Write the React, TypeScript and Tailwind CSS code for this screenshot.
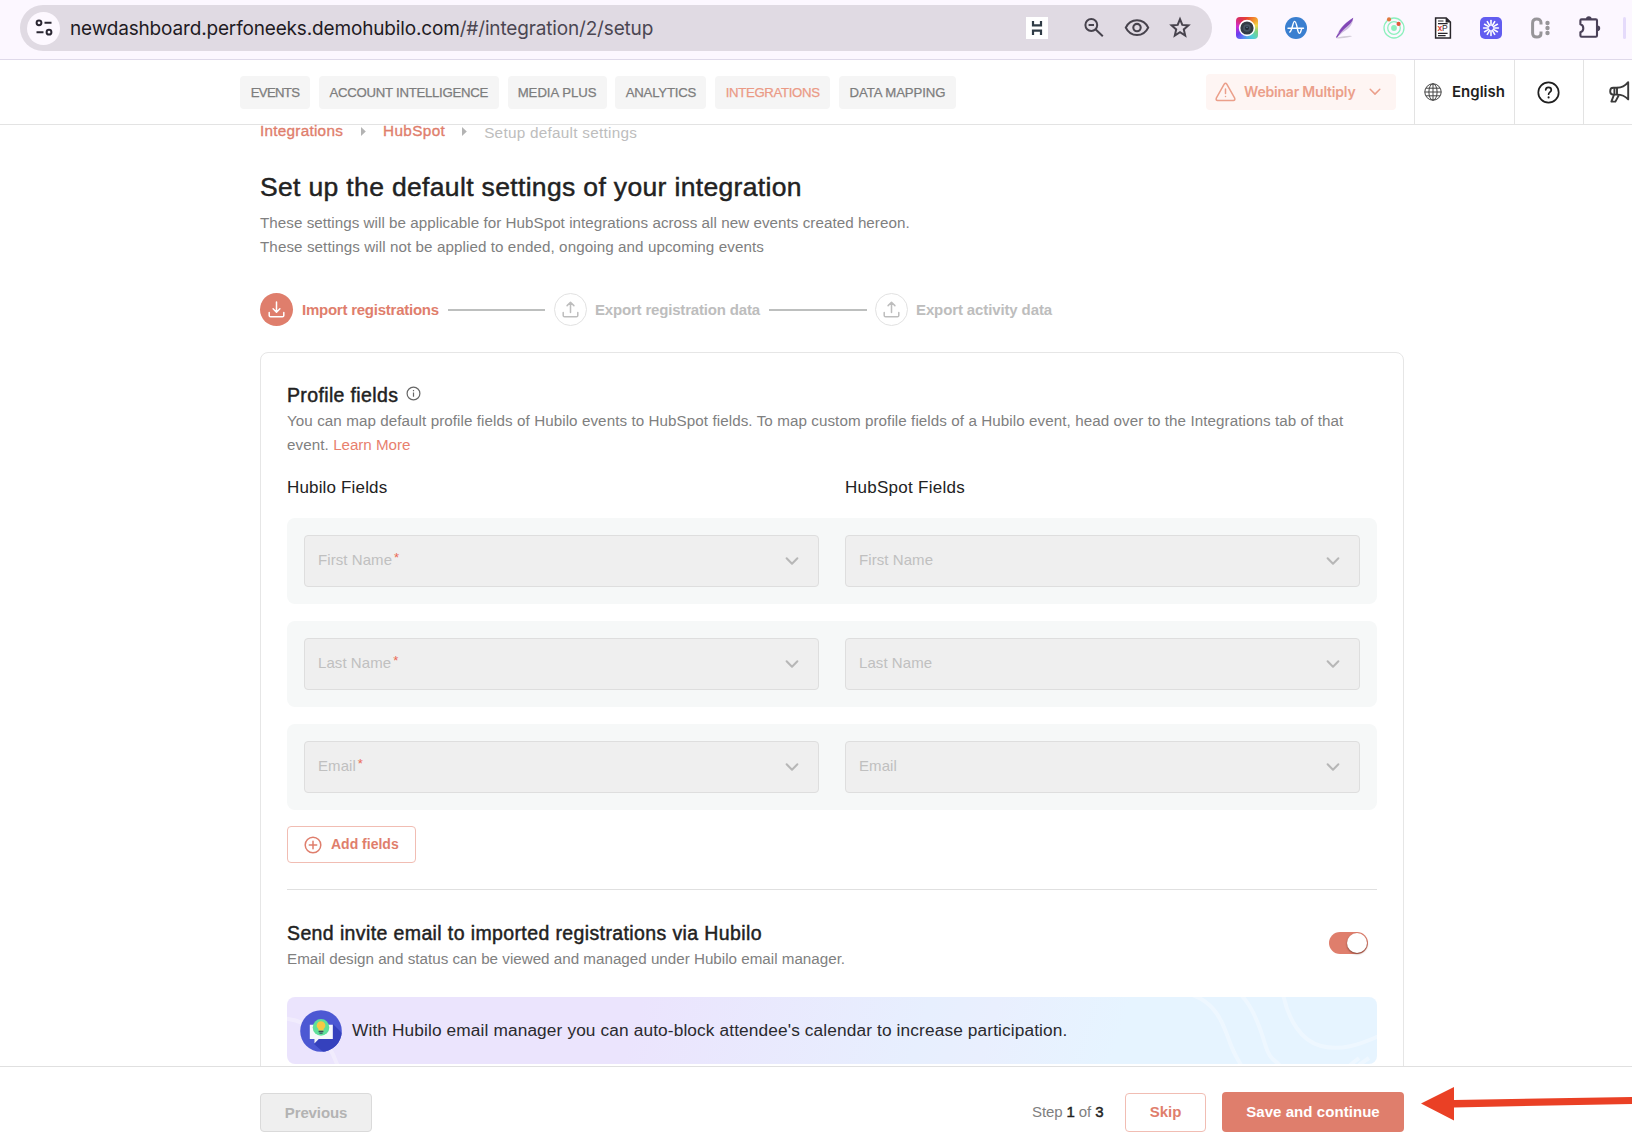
import type { ReactNode } from "react";

const medium = "[-webkit-text-stroke:0.45px_currentColor]";

/* ---------- browser toolbar ---------- */

function TuneIcon() {
  return (
    <svg width="18" height="22" viewBox="0 0 18 22" fill="none" stroke="#2b2733" strokeWidth="2">
      <circle cx="4" cy="5.8" r="2.4" />
      <path d="M9.5 5.8H16.5M1.5 15.2H8.5" />
      <circle cx="14" cy="15.2" r="2.4" />
    </svg>
  );
}

function ZoomOutIcon() {
  return (
    <svg width="24" height="24" viewBox="0 0 24 24" fill="none" stroke="#47434d" strokeWidth="2">
      <circle cx="9.3" cy="9" r="5.9" />
      <path d="M6.6 9H12M13.5 13.2L20.8 20.2" />
    </svg>
  );
}

function EyeIcon() {
  return (
    <svg width="26" height="24" viewBox="0 0 26 24" fill="none" stroke="#47434d" strokeWidth="2.1">
      <path d="M1.8 11.6C4 7 8.2 4.2 13 4.2S22 7 24.2 11.6C22 16.2 17.8 19 13 19S4 16.2 1.8 11.6Z" />
      <circle cx="13" cy="11.6" r="3.7" />
    </svg>
  );
}

function StarIcon() {
  return (
    <svg width="24" height="24" viewBox="0 0 24 24" fill="none" stroke="#47434d" strokeWidth="2">
      <path d="M12 3.2L14.3 8.9L20.4 9.4L15.8 13.4L17.2 19.5L12 16.2L6.8 19.5L8.2 13.4L3.6 9.4L9.7 8.9Z" />
    </svg>
  );
}

function HubiloIcon() {
  return (
    <div className="flex h-[22px] w-[22px] items-center justify-center bg-white">
      <svg width="12" height="16" viewBox="0 0 12 16" fill="none" stroke="#2f3b45" strokeWidth="2.2">
        <path d="M2 1V5.4H10V1M2 15V10.6H10V15" />
      </svg>
    </div>
  );
}

function CameraIcon() {
  return (
    <div className="flex h-[22px] w-[22px] items-center justify-center rounded-[4px] bg-[conic-gradient(from_0deg,#e8452f,#f39a2e_45deg,#f3d84a_75deg,#7ed37f_110deg,#4fd0d8_150deg,#5a8bf5_200deg,#6a3df0_235deg,#d22bd0_280deg,#d92f5a_320deg,#e8452f)]">
      <svg width="18" height="18" viewBox="0 0 18 18">
        <circle cx="9" cy="9" r="7.4" fill="#333c45" stroke="#fff" strokeWidth="1.6" />
        <circle cx="9" cy="9" r="3.8" fill="#475462" />
        <circle cx="9" cy="9" r="2" fill="#222b36" />
        <circle cx="9" cy="8.2" r=".8" fill="#5f7e96" />
      </svg>
    </div>
  );
}

function AmplitudeIcon() {
  return (
    <svg width="22" height="22" viewBox="0 0 22 22">
      <circle cx="11" cy="11" r="11" fill="#3a7fd0" />
      <path
        d="M3 11.2H18.5M4.8 15C7 14.5 7.8 4.4 9.6 4.4S12 11 13 14.2C13.6 16.8 14.9 17 15.6 15C16 13.8 16.4 12.8 16.8 11.4"
        fill="none"
        stroke="#fff"
        strokeWidth="1.4"
        strokeLinecap="round"
      />
    </svg>
  );
}

function FeatherIcon() {
  return (
    <svg width="22" height="22" viewBox="0 0 22 22">
      <ellipse cx="10" cy="20.2" rx="8" ry=".9" fill="#d2ccd7" transform="rotate(-7 9 20)" />
      <path d="M2.6 20.4C3.4 14 9 7 19.2 .8C19.2 6.5 15.5 12 8.8 15.2L3.2 20.6Z" fill="#cdbbdf" />
      <path d="M4.6 16C6.5 11 12.5 5 19.2 .8C18.6 4.6 15 8.5 10.5 11.6C8 13.4 6 15 4.6 16Z" fill="#8247b8" />
      <path d="M2.4 20.6C5 15.5 11 10 18 3" stroke="#8347b5" strokeWidth="1.2" fill="none" />
    </svg>
  );
}

function OrbitIcon() {
  return (
    <svg width="22" height="22" viewBox="0 0 22 22" fill="none">
      <circle cx="11" cy="11" r="10" stroke="#8df0bd" strokeWidth="1.3" />
      <circle cx="11" cy="11" r="6.3" stroke="#8df0bd" strokeWidth="1.3" />
      <circle cx="11" cy="11" r="2.9" fill="#8df0bd" />
      <circle cx="6" cy="2.4" r="2.1" fill="#e0793f" />
      <circle cx="15.6" cy="6.9" r="2.1" fill="#e0563a" />
    </svg>
  );
}

function XPathIcon() {
  return (
    <svg width="18" height="22" viewBox="0 0 18 22">
      <path d="M1.6 .9H12.2L16.4 5V21.1H1.6Z" fill="#fff" stroke="#29262b" strokeWidth="1.5" />
      <path d="M11.6 .9V5.4H16.4Z" fill="#29262b" />
      <path d="M4 4H9.5M4 6.6H13.6M4 16.4H13.6M4 18.7H11.6" stroke="#29262b" strokeWidth="1.2" />
      <text x="3.4" y="14.2" fontFamily="Liberation Sans" fontSize="8.5" fontWeight="700" fill="#dc3b32">x</text>
      <text x="8.1" y="14.2" fontFamily="Liberation Sans" fontSize="8.5" fill="#29262b">P</text>
    </svg>
  );
}

function BurstIcon() {
  const rays = Array.from({ length: 12 }, (_, i) => i * 30);
  return (
    <svg width="22" height="22" viewBox="0 0 22 22">
      <rect width="22" height="22" rx="5" fill="#625df0" />
      {rays.map((a) => (
        <path key={a} d="M11 8.3V3.6" stroke="#fff" strokeWidth="1.6" strokeLinecap="round" transform={`rotate(${a} 11 11)`} />
      ))}
    </svg>
  );
}

function CDotsIcon() {
  return (
    <svg width="21" height="22" viewBox="0 0 21 22">
      <path d="M11 7.6V5.8C11 3.2 9.2 2 6.8 2S2.6 3.4 2.6 6V16C2.6 18.6 4.4 20 6.8 20S11 18.8 11 16.2V14.4" fill="none" stroke="#979599" strokeWidth="3" />
      <circle cx="17.5" cy="6" r="2.2" fill="#979599" />
      <circle cx="17.5" cy="11" r="2.2" fill="#979599" />
      <circle cx="17.5" cy="16" r="2.2" fill="#979599" />
    </svg>
  );
}

function PuzzleIcon() {
  return (
    <svg width="24" height="24" viewBox="0 0 24 24">
      <path d="M3.4 4.6Q3.4 3.4 4.6 3.4H18.8Q20 3.4 20 4.6V19.6Q20 20.8 18.8 20.8H4.6Q3.4 20.8 3.4 19.6V16.2C5.4 15.6 6.3 14.2 6.3 12.2S5.4 8.8 3.4 8.2Z" fill="none" stroke="#4a4158" strokeWidth="2.1" strokeLinejoin="round" />
      <path d="M9 3A2.8 2.8 0 0 1 14.6 3ZM20.4 9.4A2.8 2.8 0 0 1 20.4 15Z" fill="#4a4158" />
    </svg>
  );
}

const extensions: ReactNode[] = [
  <CameraIcon />, <AmplitudeIcon />, <FeatherIcon />, <OrbitIcon />, <XPathIcon />, <BurstIcon />, <CDotsIcon />, <PuzzleIcon />,
];

function BrowserBar() {
  return (
    <div className="flex h-[60px] shrink-0 border-b border-[#dfd9ea] bg-[#fcf7ff] pt-[5px]">
      <div className="ml-5 flex h-[46px] w-[1192px] shrink-0 items-center rounded-full bg-[#e0dae3] pl-[7px]">
        <div className="flex h-[33px] w-[33px] items-center justify-center rounded-full bg-[#fdf8ff]">
          <TuneIcon />
        </div>
        <div className="ml-[10px] whitespace-nowrap pt-px font-[Inter] text-[19px] leading-6 tracking-[-0.16px] text-[#1f1b24]">
          newdashboard.perfoneeks.demohubilo.com<span className="text-[#4b4652]">/#/integration/2/setup</span>
        </div>
        <div className="ml-auto mr-5 flex items-center">
          <HubiloIcon />
          <div className="ml-[34px] flex items-center gap-[18px]">
            <ZoomOutIcon />
            <EyeIcon />
            <StarIcon />
          </div>
        </div>
      </div>
      <div className="ml-[11px] flex h-[46px] shrink-0 items-center">
        {extensions.map((icon, i) => (
          <div key={i} className="flex w-[48.8px] justify-center">{icon}</div>
        ))}
      </div>
      <div className="ml-[10px] mt-3 h-[22px] w-[3px] shrink-0 rounded-full bg-[#e5dbfb]" />
    </div>
  );
}

/* ---------- app header ---------- */

const tabs = [
  { label: "EVENTS", cls: "w-[70px] tracking-[-0.7px]" },
  { label: "ACCOUNT INTELLIGENCE", cls: "w-[180px] tracking-[-0.27px]" },
  { label: "MEDIA PLUS", cls: "w-[99px] tracking-[-0.03px]" },
  { label: "ANALYTICS", cls: "w-[91px] tracking-[-0.2px]" },
  { label: "INTEGRATIONS", cls: "w-[115px] tracking-[-0.32px]", active: true },
  { label: "DATA MAPPING", cls: "w-[117px] tracking-[-0.1px]" },
];

function GlobeIcon() {
  return (
    <svg width="18" height="18" viewBox="0 0 18 18" fill="none" stroke="#444" strokeWidth="1">
      <circle cx="9" cy="9" r="8.2" />
      <ellipse cx="9" cy="9" rx="4.1" ry="8.2" />
      <path d="M9 .8V17.2M.8 9H17.2M2 5.2H16M2 12.8H16" />
    </svg>
  );
}

function MegaphoneIcon() {
  return (
    <svg width="22" height="24" viewBox="0 0 22 24" fill="none" stroke="#3a3a3a" strokeWidth="1.9" strokeLinejoin="round">
      <path d="M8 7.8C12.5 7.8 16.5 5.6 19.2 2.2V19.4C16.5 16.4 12.5 14.6 8 14.6" />
      <path d="M8 7.8H4.2C2.2 7.8 1.2 9 1.2 11.2S2.2 14.6 4.2 14.6H8ZM5.4 7.8V14.6" />
      <path d="M5 14.6L2.4 21.6H6.4L9.8 15.2" />
    </svg>
  );
}

function Header() {
  return (
    <header className="flex h-[65px] shrink-0 items-center border-b border-[#e3e3e3] bg-white pl-[240px]">
      <nav className="flex gap-[8.8px]">
        {tabs.map((t) => (
          <div
            key={t.label}
            className={`flex h-[33px] items-center justify-center whitespace-nowrap rounded-[4px] bg-[#f5f5f5] pt-px text-[13.2px] [-webkit-text-stroke:0.25px_currentColor] ${t.active ? "text-[#eb9a85]" : "text-[#7d7d7d]"} ${t.cls}`}
          >
            {t.label}
          </div>
        ))}
      </nav>
      <div className="ml-auto flex h-full items-center">
        <div className="flex h-9 w-[190px] items-center rounded-[4px] bg-[#fef5f3] pl-[9px] font-[Inter] text-[14px] font-semibold tracking-[-0.2px] text-[#eb9f8a]">
          <svg width="21" height="20" viewBox="0 0 21 20" fill="none" stroke="currentColor" strokeWidth="1.5" strokeLinecap="round" strokeLinejoin="round">
            <path d="M9.2 2.2Q10.5 .4 11.8 2.2L19.7 16.2Q20.4 18.2 18.4 18.4H2.6Q.6 18.2 1.3 16.2ZM10.5 7V11.4M10.5 14.4V14.5" />
          </svg>
          <span className="ml-[8px] whitespace-nowrap pb-[2px]">Webinar Multiply</span>
          <svg className="ml-[14px]" width="12" height="8" viewBox="0 0 12 8" fill="none" stroke="currentColor" strokeWidth="1.5" strokeLinecap="round" strokeLinejoin="round">
            <path d="M1.2 1.3L6 6.1L10.8 1.3" />
          </svg>
        </div>
        <div className="ml-[18px] flex h-full w-[100px] items-center border-l border-[#e3e3e3] pl-[9px] font-[Inter] text-[15px] font-semibold text-[#1f1f1f]">
          <GlobeIcon />
          <span className="ml-[10px] pt-px">English</span>
        </div>
        <div className="flex h-full w-[69px] items-center justify-center border-l border-[#e3e3e3] pr-px">
          <svg width="23" height="23" viewBox="0 0 23 23" fill="none" stroke="#1f1f1f" strokeWidth="1.7" strokeLinecap="round">
            <circle cx="11.5" cy="11.5" r="10.2" />
            <path d="M8.7 8.9C8.8 7.2 10 6.3 11.5 6.3S14.3 7.3 14.3 8.9C14.3 10.9 11.6 11.2 11.6 13.2" />
            <path d="M11.6 16.4V16.5" strokeWidth="2.1" />
          </svg>
        </div>
        <div className="flex h-full w-[49px] items-center border-l border-[#e3e3e3] pl-[25px]">
          <MegaphoneIcon />
        </div>
      </div>
    </header>
  );
}

/* ---------- content ---------- */

function Caret() {
  return (
    <svg width="5" height="9" viewBox="0 0 5 9" fill="#b3b3b3">
      <path d="M0 0L4.8 4.5L0 9Z" />
    </svg>
  );
}

function TransferIcon({ up = false }: { up?: boolean }) {
  return (
    <svg width="17" height="17" viewBox="0 0 17 17" fill="none" stroke="currentColor" strokeWidth="1.5" strokeLinecap="round" strokeLinejoin="round">
      <path d={up ? "M8.5 11.4V1.2M5.1 4.6L8.5 1.2L11.9 4.6" : "M8.5 1V11M5.1 7.8L8.5 11.2L11.9 7.8"} />
      <path d="M1.2 11.6V14.4Q1.2 15.8 2.6 15.8H14.4Q15.8 15.8 15.8 14.4V11.6" />
    </svg>
  );
}

function StepBadge({ active = false }: { active?: boolean }) {
  return (
    <div className={`flex h-[33px] w-[33px] items-center justify-center rounded-full ${active ? "bg-[#df7e6c] text-white" : "border border-[#e2e2e2] text-[#bdbdbd]"}`}>
      <TransferIcon up={!active} />
    </div>
  );
}

function Steps() {
  return (
    <div className="mt-[34px] flex h-[33px] items-center whitespace-nowrap text-[15px] text-[#bdbdbd]">
      <StepBadge active />
      <span className="ml-[9px] w-[137px] pt-px font-bold tracking-[-0.24px] text-[#df7e6c]">Import registrations</span>
      <div className="ml-[9px] h-[2px] w-[97px] bg-[#bdbfbe]" />
      <div className="ml-[9px]"><StepBadge /></div>
      <span className="ml-[8px] w-[165px] pt-px font-bold tracking-[-0.18px]">Export registration data</span>
      <div className="ml-[9px] h-[2px] w-[98px] bg-[#bdbfbe]" />
      <div className="ml-[8px]"><StepBadge /></div>
      <span className="ml-[8px] pt-px font-bold tracking-[-0.12px]">Export activity data</span>
    </div>
  );
}

function SelectBox({ label, required = false }: { label: string; required?: boolean }) {
  return (
    <div className="flex h-[52px] flex-1 items-center justify-between rounded-[4px] border border-[#dedede] bg-[#efefef] pl-[13px] pr-[19px] text-[15px] tracking-[0.07px] text-[#c0c0c0]">
      <span className="flex pb-px">
        {label}
        {required && <span className="ml-[2px] mt-[-1px] text-[13px] text-[#ea6a55]">*</span>}
      </span>
      <svg width="14" height="10" viewBox="0 0 14 10" fill="none" stroke="#b7b7b7" strokeWidth="2" strokeLinecap="round" strokeLinejoin="round">
        <path d="M1.6 2.2L7 7.8L12.4 2.2" />
      </svg>
    </div>
  );
}

function Banner() {
  return (
    <div className="relative mt-[26px] flex h-[67px] items-center overflow-hidden rounded-[8px] bg-[linear-gradient(108deg,#ebe4fd_32%,#e7effe_58%,#e9effe_64%,#e6f4ff_76%)] pl-[13px]">
      <svg className="absolute inset-0" width="1090" height="67" viewBox="0 0 1090 67" fill="none" stroke="#fff" strokeOpacity=".32" strokeWidth="4">
        <path d="M902 -3C928 4 936 26 942 43S950 60 955 70" />
        <path d="M953 -3C965 8 973 30 978 47S988 62 994 70" />
        <path d="M996 -3C1001 22 1014 44 1034 49S1072 48 1092 39" />
        <path d="M1062 69L1072 61M1072 68L1082 61" />
        <path d="M-2 21.5C24 24 42 42 51 70" />
      </svg>
      <svg className="relative shrink-0" width="42" height="42" viewBox="0 0 42 42">
        <defs>
          <clipPath id="badge"><circle cx="21" cy="21" r="20.8" /></clipPath>
        </defs>
        <circle cx="21" cy="21" r="20.8" fill="#4c58d3" />
        <path d="M33 14L48 29L30 48L14 34L14 29H33Z" fill="#3541bd" clipPath="url(#badge)" />
        <path d="M9.8 14.8H32.8V29H18.8L14.4 33.4V29H9.8Z" fill="#f7f8fb" />
        <circle cx="21" cy="17.4" r="8.3" fill="#5fe09a" />
        <path d="M21 11.2A4.3 4.3 0 0 1 23.6 18.9V20.6H18.4V18.9A4.3 4.3 0 0 1 21 11.2Z" fill="#f6c945" />
        <path d="M18.6 20.8H23.4V22.2H18.6ZM19.4 22.8H22.6V23.8H19.4Z" fill="#3b4a5c" />
      </svg>
      <span className="relative ml-[10px] whitespace-nowrap text-[17.3px] tracking-[0.12px] text-[#2a2a2e]">
        With Hubilo email manager you can auto-block attendee's calendar to increase participation.
      </span>
    </div>
  );
}

function Card() {
  return (
    <section className="mt-[26px] h-[760px] w-[1144px] rounded-t-[8px] border border-[#e6e6e6] px-[26px] pt-[30px]">
      <h2 className="flex h-6 items-center text-[19.5px] leading-6 text-[#222]">
        <span className={`tracking-[0.36px] ${medium}`}>Profile fields</span>
        <svg className="ml-[8px] mt-[-3px]" width="15" height="15" viewBox="0 0 15 15" fill="none" stroke="#666" strokeWidth="1.2">
          <circle cx="7.5" cy="7.5" r="6.4" />
          <path d="M7.5 6.6V10.8M7.5 4.1V5.3" />
        </svg>
      </h2>
      <p className="mt-[2px] whitespace-nowrap text-[15.2px] leading-6 tracking-[0.075px] text-[#808080]">
        You can map default profile fields of Hubilo events to HubSpot fields. To map custom profile fields of a Hubilo event, head over to the Integrations tab of that
        <br />
        event. <span className="tracking-[-0.05px] text-[#e87f6e]">Learn More</span>
      </p>
      <div className="mt-[19px] flex text-[17px] leading-6 text-[#222]">
        <span className="w-[558px] tracking-[0.16px]">Hubilo Fields</span>
        <span className="tracking-[0.27px]">HubSpot Fields</span>
      </div>
      <div className="mt-[18px] flex flex-col gap-[17px]">
        {["First Name", "Last Name", "Email"].map((label) => (
          <div key={label} className="flex h-[86px] items-center gap-[26px] rounded-[8px] bg-[#f6f8f8] px-[17px]">
            <SelectBox label={label} required />
            <SelectBox label={label} />
          </div>
        ))}
      </div>
      <button className="mt-[16px] flex h-[37px] w-[129px] items-center rounded-[4px] border border-[#f1bdb3] pl-[16px] text-[14px] font-bold text-[#df7e6c]">
        <svg width="18" height="18" viewBox="0 0 18 18" fill="none" stroke="currentColor" strokeWidth="1.5" strokeLinecap="round">
          <circle cx="9" cy="9" r="7.8" />
          <path d="M9 5.3V12.7M5.3 9H12.7" />
        </svg>
        <span className="ml-[9px]">Add fields</span>
      </button>
      <div className="mt-[26px] h-px bg-[#e0e0e0]" />
      <div className="mt-[31px] flex justify-between">
        <div>
          <h2 className={`text-[19.5px] leading-6 tracking-[0.385px] text-[#222] ${medium}`}>Send invite email to imported registrations via Hubilo</h2>
          <p className="mt-[2px] text-[15.2px] leading-6 text-[#808080]">
            Email design and status can be viewed and managed under Hubilo email manager.
          </p>
        </div>
        <div className="mr-[9px] mt-[11px] flex h-[22px] w-[39px] items-center justify-end rounded-full bg-[#df7e6c] pr-[1px]">
          <div className="h-5 w-5 rounded-full bg-white shadow-[0_1px_2px_rgba(60,20,10,0.6)]" />
        </div>
      </div>
      <Banner />
    </section>
  );
}

function Footer() {
  return (
    <footer className="relative flex h-[80px] shrink-0 items-center border-t border-[#e0e0e0] bg-white pl-[260px] pt-[26px] text-[15px]">
      <button className="h-[39px] w-[112px] shrink-0 self-start rounded-[4px] border border-[#dadada] bg-[#efefef] pt-px font-bold tracking-[-0.12px] text-[#b3b3b3]">Previous</button>
      <div className="ml-[660px] mt-[-1px] flex w-[485px] shrink-0 items-center self-start">
        <span className="w-[93px] whitespace-nowrap tracking-[-0.1px] text-[#808080]">
          Step <span className={`text-[#222] ${medium}`}>1</span> of <span className={`text-[#222] ${medium}`}>3</span>
        </span>
        <button className="h-[39px] w-[81px] rounded-[4px] border border-[#f1bdb3] pt-px font-bold text-[#df7e6c]">Skip</button>
        <button className="ml-[16px] h-10 w-[182px] rounded-[4px] bg-[#df7e6c] pt-px font-bold tracking-[0.06px] text-white">Save and continue</button>
      </div>
      <svg className="absolute right-0 top-[16px]" width="212" height="42" viewBox="0 0 212 42" fill="#ea4025">
        <path d="M1 20.5L34 4V17L212 14V21L34 24.5V37.5Z" />
      </svg>
    </footer>
  );
}

export default function App() {
  return (
    <div className="flex h-[1146px] w-[1632px] flex-col overflow-hidden bg-white font-['Liberation_Sans',Arial,sans-serif]">
      <BrowserBar />
      <Header />
      <main className="min-h-0 flex-1 pl-[260px]">
        <div className="mt-[-4px] flex h-5 items-center whitespace-nowrap text-[15.3px] leading-5">
          <span className="tracking-[0.26px] text-[#df7e6c] [-webkit-text-stroke:0.35px_currentColor]">Integrations</span>
          <span className="ml-[18px]"><Caret /></span>
          <span className="ml-[17px] tracking-[0.36px] text-[#df7e6c] [-webkit-text-stroke:0.35px_currentColor]">HubSpot</span>
          <span className="ml-[17px]"><Caret /></span>
          <span className="ml-[17px] mt-[3px] tracking-[0.27px] text-[#bdbdbd]">Setup default settings</span>
        </div>
        <h1 className={`mt-[30px] text-[26.5px] leading-8 tracking-[0.34px] text-[#222] ${medium}`}>Set up the default settings of your integration</h1>
        <p className="mt-[8px] text-[15.2px] leading-6 tracking-[0.04px] text-[#808080]">
          These settings will be applicable for HubSpot integrations across all new events created hereon.
          <br />
          <span className="tracking-[0.08px]">These settings will not be applied to ended, ongoing and upcoming events</span>
        </p>
        <Steps />
        <Card />
      </main>
      <Footer />
    </div>
  );
}
